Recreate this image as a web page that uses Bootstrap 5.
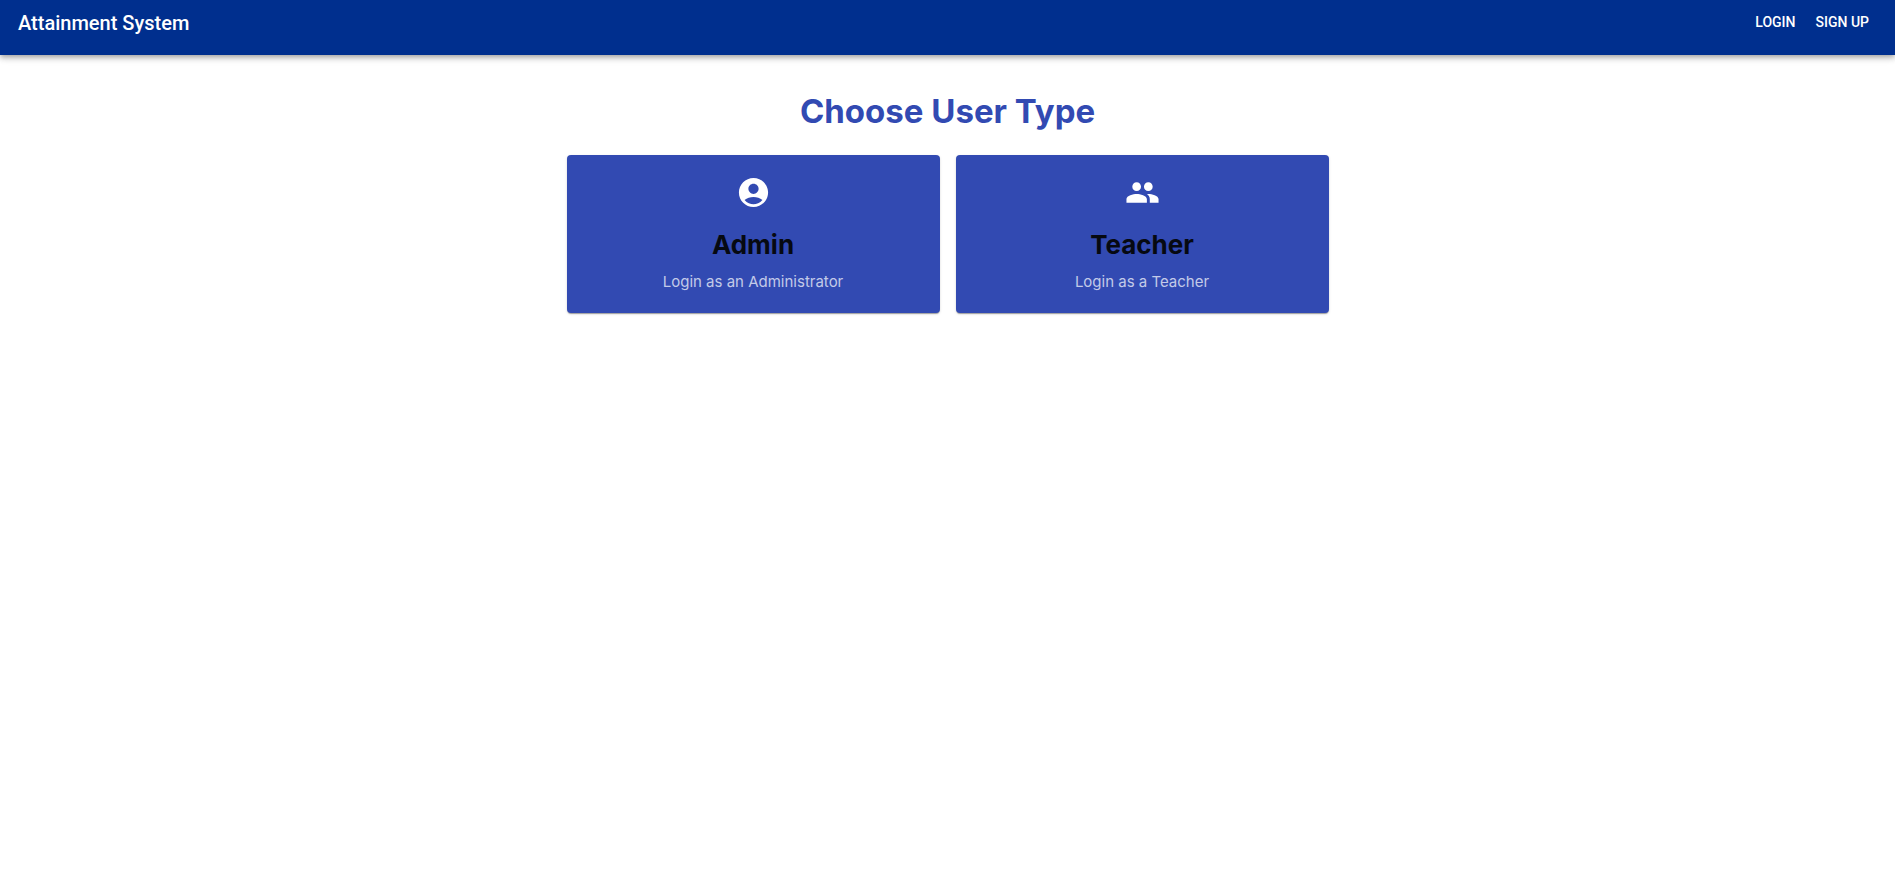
<!DOCTYPE html>
<html lang="en">
<head>
<meta charset="utf-8">
<meta name="viewport" content="width=device-width, initial-scale=1">
<title>Attainment System</title>
<link rel="stylesheet" href="https://cdn.jsdelivr.net/npm/bootstrap@5.3.0/dist/css/bootstrap.min.css">
<style>
body { font-family: "Inter", "Open Sans", sans-serif; background: #fff; }
.topbar {
  min-height: 55px; padding: 8px 26px 16px 18px; background: #002f8e; color: #fff;
  font-family: Roboto, "Liberation Sans", sans-serif;
  box-shadow: 0 2px 4px -1px rgba(0,0,0,.2), 0 4px 5px rgba(0,0,0,.14), 0 1px 10px rgba(0,0,0,.12);
}
.topbar a { color: #fff; text-decoration: none; }
.brand { font-size: 20px; line-height: 30px; font-weight: 500; }
.topbar nav a { font-size: 14px; line-height: 28px; font-weight: 500; }
.topbar nav { gap: 20px; }
.chooser { max-width: 786px; padding: 32px 12px; }
.chooser h1 { font-size: 33px; line-height: 48px; font-weight: 700; color: #324ab2; margin-bottom: 20px; }
.user-type {
  background: #324ab2; border: 0; border-radius: 4px; padding: 20px; text-decoration: none;
  box-shadow: 0 2px 1px -1px rgba(0,0,0,.2), 0 1px 1px rgba(0,0,0,.14), 0 1px 3px rgba(0,0,0,.12);
}
.user-type svg { width: 35px; height: 35px; fill: #fff; }
.user-type h2 { font-size: 26px; line-height: 38px; font-weight: 700; color: #060911; margin: 16px 0 6px; }
.user-type p { font-size: 15px; line-height: 23px; color: #c3cae8; margin: 0; }
</style>
</head>
<body>
<header class="topbar d-flex justify-content-between align-items-start">
  <a class="brand" href="#">Attainment System</a>
  <nav class="d-flex" aria-label="Account">
    <a href="#login">LOGIN</a>
    <a href="#signup">SIGN UP</a>
  </nav>
</header>
<main class="chooser container-fluid mx-auto">
  <h1 class="text-center">Choose User Type</h1>
  <div class="row row-cols-1 row-cols-sm-2 g-3">
    <div class="col">
      <a class="user-type card align-items-center text-center" href="#admin">
        <svg viewBox="0 0 24 24" aria-hidden="true"><path d="M12 2C6.480 2 2 6.480 2 12s4.480 10 10 10 10-4.480 10-10S17.520 2 12 2zm0 4c1.930 0 3.500 1.570 3.500 3.500S13.930 13 12 13s-3.500-1.570-3.500-3.500S10.070 6 12 6zm0 14c-2.030 0-4.430-.820-6.140-2.880C7.550 15.800 9.680 15 12 15s4.450.800 6.140 2.120C16.430 19.180 14.030 20 12 20z"/></svg>
        <h2>Admin</h2>
        <p>Login as an Administrator</p>
      </a>
    </div>
    <div class="col">
      <a class="user-type card align-items-center text-center" href="#teacher">
        <svg viewBox="0 0 24 24" aria-hidden="true"><path d="M16 11c1.660 0 2.990-1.340 2.990-3S17.660 5 16 5c-1.660 0-3 1.340-3 3s1.340 3 3 3zm-8 0c1.660 0 2.990-1.340 2.990-3S9.660 5 8 5C6.340 5 5 6.340 5 8s1.340 3 3 3zm0 2c-2.330 0-7 1.170-7 3.500V19h14v-2.500c0-2.330-4.670-3.500-7-3.500zm8 0c-.290 0-.620.020-.970.050 1.160.840 1.970 1.970 1.970 3.450V19h6v-2.500c0-2.330-4.670-3.500-7-3.500z"/></svg>
        <h2>Teacher</h2>
        <p>Login as a Teacher</p>
      </a>
    </div>
  </div>
</main>
<script src="https://cdn.jsdelivr.net/npm/bootstrap@5.3.0/dist/js/bootstrap.bundle.min.js"></script>
</body>
</html>
